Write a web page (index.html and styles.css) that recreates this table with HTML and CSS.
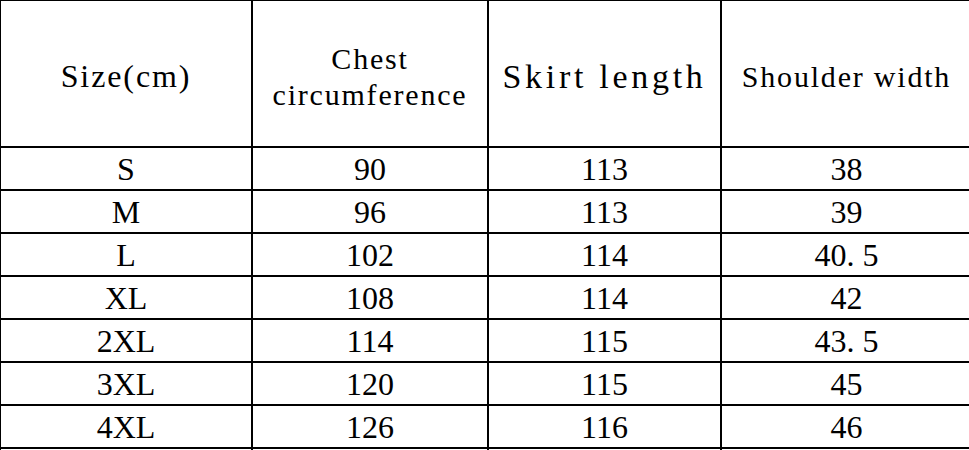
FILE: index.html
```html
<!DOCTYPE html>
<html>
<head>
<meta charset="utf-8">
<link rel="stylesheet" href="styles.css">
</head>
<body>
<div class="chart">
  <div class="cell head"><span class="h-size">Size(cm)</span></div>
  <div class="cell head"><span class="h-chest">Chest<br>circumference</span></div>
  <div class="cell head"><span class="h-skirt">Skirt length</span></div>
  <div class="cell head"><span class="h-shoulder">Shoulder width</span></div>

  <div class="cell">S</div><div class="cell">90</div><div class="cell">113</div><div class="cell">38</div>
  <div class="cell">M</div><div class="cell">96</div><div class="cell">113</div><div class="cell">39</div>
  <div class="cell">L</div><div class="cell">102</div><div class="cell">114</div><div class="cell">40<span class="dot">.</span>5</div>
  <div class="cell">XL</div><div class="cell">108</div><div class="cell">114</div><div class="cell">42</div>
  <div class="cell">2XL</div><div class="cell">114</div><div class="cell">115</div><div class="cell">43<span class="dot">.</span>5</div>
  <div class="cell">3XL</div><div class="cell">120</div><div class="cell">115</div><div class="cell">45</div>
  <div class="cell">4XL</div><div class="cell">126</div><div class="cell">116</div><div class="cell">46</div>
  <div class="cell"></div><div class="cell"></div><div class="cell"></div><div class="cell"></div>
</div>
</body>
</html>
```

FILE: styles.css
```css
html, body {
  margin: 0;
  padding: 0;
  background: #fff;
  overflow: hidden;
}

.chart {
  display: grid;
  grid-template-columns: 250px 234px 231px 249px;
  grid-auto-rows: 41px;
  grid-template-rows: 145px;
  gap: 2px;
  width: 970px;
  height: 449px;
  overflow: hidden;
  padding: 1px 2px 0 1px;
  background: #000;
  font-family: "Liberation Serif", "Times New Roman", serif;
  color: #000;
}

.cell {
  background: #fff;
  display: flex;
  align-items: center;
  justify-content: center;
  box-sizing: border-box;
  padding-top: 2px;
  font-size: 32px;
  line-height: 39px;
  white-space: nowrap;
}

.head {
  padding-top: 6px;
  text-align: center;
  line-height: normal;
}

.h-size {
  font-size: 32px;
  letter-spacing: 1.9px;
}

.h-chest {
  font-size: 30px;
  line-height: 36px;
  letter-spacing: 1.8px;
}

.h-skirt {
  font-size: 34px;
  letter-spacing: 3.7px;
}

.h-shoulder {
  font-size: 30px;
  letter-spacing: 1.8px;
}

.dot {
  padding-right: 8px;
}
```
